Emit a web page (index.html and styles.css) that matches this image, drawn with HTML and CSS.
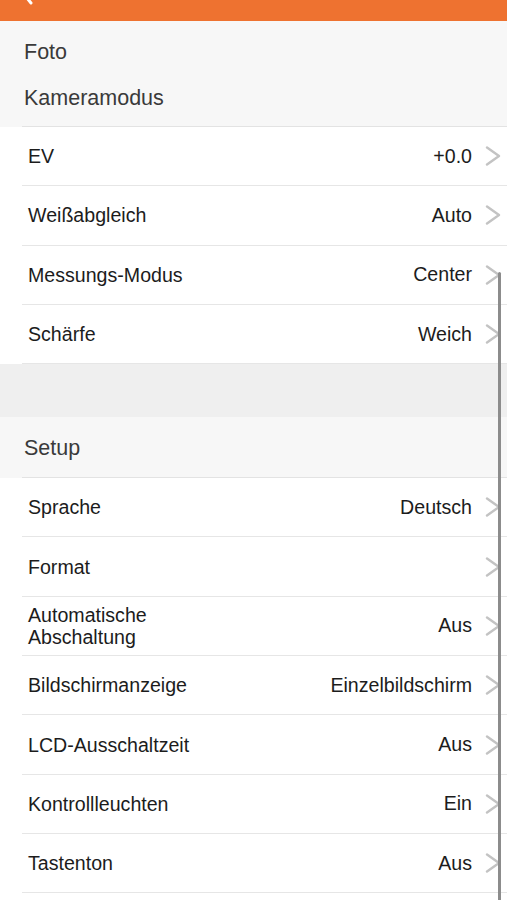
FILE: index.html
```html
<!DOCTYPE html>
<html lang="de">
<head>
<meta charset="utf-8">
<link rel="stylesheet" href="styles.css">
</head>
<body>
<div class="topbar">
  <svg class="back" width="14" height="24" viewBox="0 0 14 24"><path d="M11 2 L3 12 L11 22" fill="none" stroke="#fff" stroke-width="3" stroke-linecap="round" stroke-linejoin="round"/></svg>
</div>

<div class="group-head first">
  <div class="head-inner">
    <div class="head-line">Foto</div>
    <div class="head-line">Kameramodus</div>
  </div>
</div>
<div class="list">
  <div class="row"><span class="label">EV</span><span class="value">+0.0</span><svg class="chev" viewBox="0 0 16 20"><path d="M2 1.5 L14 10 L2 18.5" /></svg></div>
  <div class="row"><span class="label">Weißabgleich</span><span class="value">Auto</span><svg class="chev" viewBox="0 0 16 20"><path d="M2 1.5 L14 10 L2 18.5" /></svg></div>
  <div class="row"><span class="label">Messungs-Modus</span><span class="value">Center</span><svg class="chev" viewBox="0 0 16 20"><path d="M2 1.5 L14 10 L2 18.5" /></svg></div>
  <div class="row"><span class="label">Schärfe</span><span class="value">Weich</span><svg class="chev" viewBox="0 0 16 20"><path d="M2 1.5 L14 10 L2 18.5" /></svg></div>
</div>

<div class="gap"></div>

<div class="group-head second">
  <div class="head-inner">
    <div class="head-line">Setup</div>
  </div>
</div>
<div class="list">
  <div class="row"><span class="label">Sprache</span><span class="value">Deutsch</span><svg class="chev" viewBox="0 0 16 20"><path d="M2 1.5 L14 10 L2 18.5" /></svg></div>
  <div class="row"><span class="label">Format</span><span class="value"></span><svg class="chev" viewBox="0 0 16 20"><path d="M2 1.5 L14 10 L2 18.5" /></svg></div>
  <div class="row"><span class="label two">Automatische<br>Abschaltung</span><span class="value">Aus</span><svg class="chev" viewBox="0 0 16 20"><path d="M2 1.5 L14 10 L2 18.5" /></svg></div>
  <div class="row"><span class="label">Bildschirmanzeige</span><span class="value">Einzelbildschirm</span><svg class="chev" viewBox="0 0 16 20"><path d="M2 1.5 L14 10 L2 18.5" /></svg></div>
  <div class="row"><span class="label">LCD-Ausschaltzeit</span><span class="value">Aus</span><svg class="chev" viewBox="0 0 16 20"><path d="M2 1.5 L14 10 L2 18.5" /></svg></div>
  <div class="row"><span class="label">Kontrollleuchten</span><span class="value">Ein</span><svg class="chev" viewBox="0 0 16 20"><path d="M2 1.5 L14 10 L2 18.5" /></svg></div>
  <div class="row"><span class="label">Tastenton</span><span class="value">Aus</span><svg class="chev" viewBox="0 0 16 20"><path d="M2 1.5 L14 10 L2 18.5" /></svg></div>
</div>

<div class="scrollbar"></div>
</body>
</html>
```

FILE: styles.css
```css
html, body {
  margin: 0;
  padding: 0;
}
body {
  width: 507px;
  height: 900px;
  overflow: hidden;
  background: #ffffff;
  font-family: "Liberation Sans", Arial, sans-serif;
  color: #1c1c1c;
  position: relative;
}
.topbar {
  height: 21px;
  background: #ee7230;
  display: flex;
  align-items: flex-start;
  overflow: hidden;
  padding-left: 20px;
}
.back {
  margin-top: -19px;
  flex: none;
}
.group-head {
  background: #f7f7f7;
}
.head-inner {
  margin-left: 22px;
  padding-left: 2px;
  border-bottom: 1px solid #e3e3e3;
  box-sizing: border-box;
}
.group-head.first .head-inner {
  padding-top: 8px;
  height: 106px;
}
.group-head.second .head-inner {
  padding-top: 8px;
  height: 61px;
}
.head-line {
  height: 46px;
  line-height: 46px;
  font-size: 21.5px;
  color: #3a3a3a;
}
.list {
  background: #ffffff;
}
.row {
  margin-left: 22px;
  height: 59.3px;
  box-sizing: border-box;
  border-bottom: 1px solid #e6e6e6;
  display: flex;
  align-items: center;
  padding-left: 6px;
  padding-right: 6px;
  font-size: 19.6px;
}
.label {
  flex: 1;
  line-height: 22px;
}
.value {
  text-align: right;
  white-space: nowrap;
}
.chev {
  width: 16px;
  height: 20px;
  margin-left: 13px;
  flex: none;
}
.chev path {
  fill: none;
  stroke: #c3c3c3;
  stroke-width: 2.4;
  stroke-linecap: round;
  stroke-linejoin: round;
}
.gap {
  height: 53px;
  background: #efefef;
}
.scrollbar {
  position: absolute;
  left: 498px;
  top: 272px;
  width: 3px;
  height: 640px;
  border-radius: 2px;
  background: #8c8c8c;
}
```
